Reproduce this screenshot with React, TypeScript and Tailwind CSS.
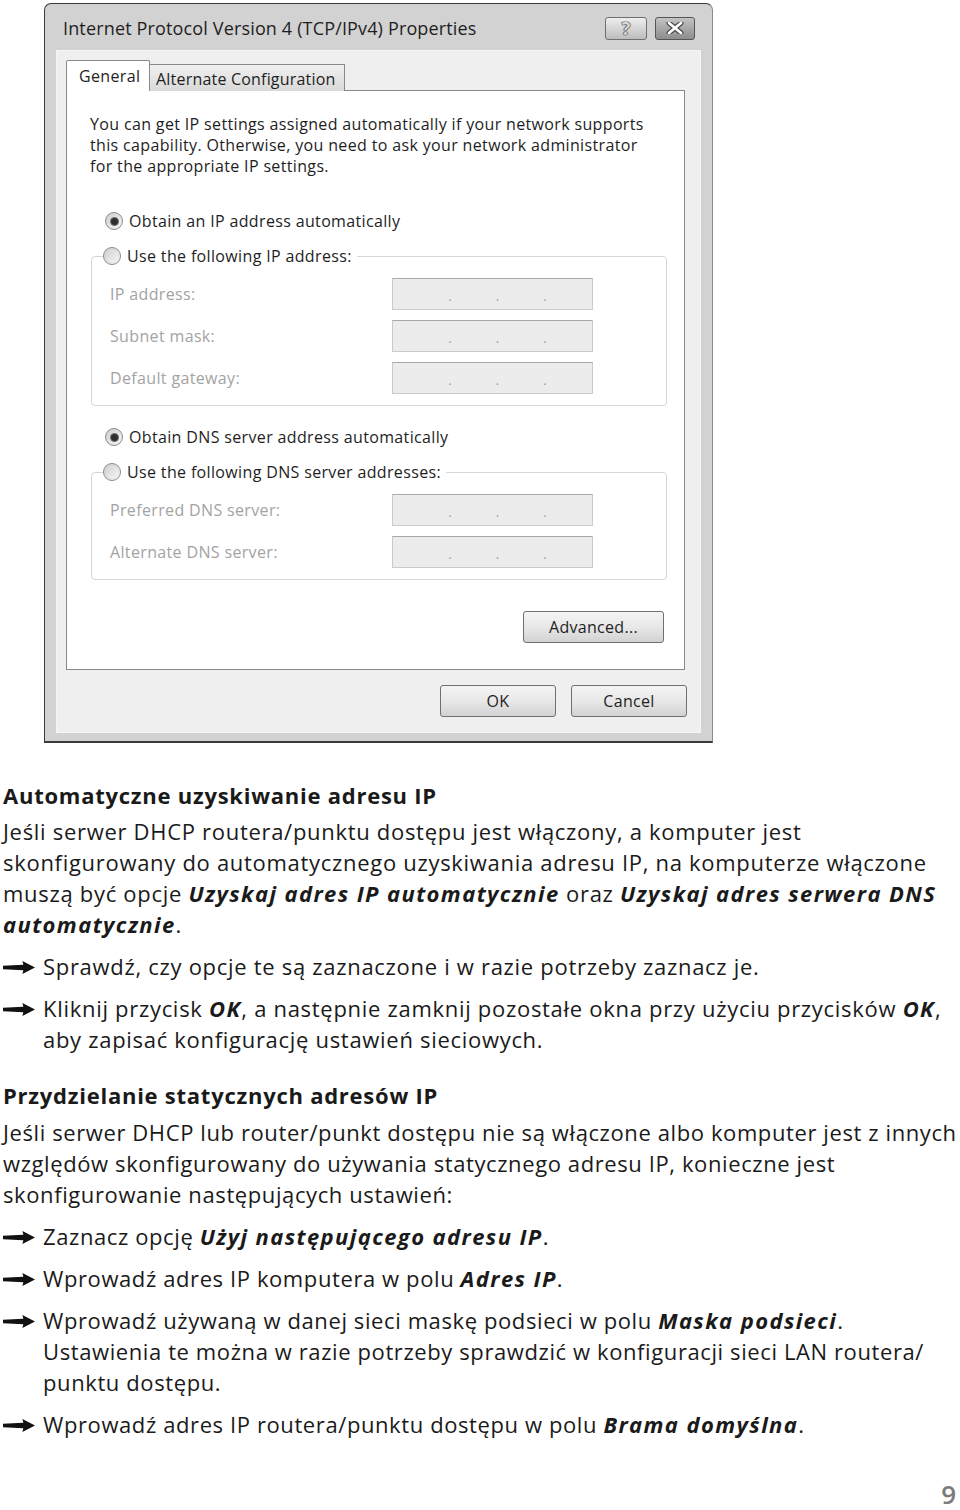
const dlgFont = "font-['Open_Sans',sans-serif]";

function Radio({ checked }: { checked?: boolean }) {
  return (
    <span className="w-[18px] h-[18px] shrink-0 rounded-full border border-[#8a8a8a] bg-linear-to-br from-[#cfcfcf] to-[#f7f7f7] flex items-center justify-center">
      {checked && (
        <span className="w-[9px] h-[9px] rounded-full bg-[#2f2f2f] border border-[#6a6a6a]" />
      )}
    </span>
  );
}

function IpField() {
  return (
    <div className="w-[201px] h-[32px] bg-[#ececec] border border-[#cacaca] border-t-[#a9a9a9] flex items-end justify-center gap-[44px] pl-[10px] pb-[6px] text-[#9a9a9a] text-[13px] leading-none tracking-normal">
      <span>.</span>
      <span>.</span>
      <span>.</span>
    </div>
  );
}

function Button({ label, w }: { label: string; w: string }) {
  return (
    <div
      className={`${w} h-[32px] rounded-[3px] border border-[#707070] bg-linear-to-b from-[#f4f4f4] via-[#e8e8e8] to-[#d2d2d2] flex items-center justify-center text-[16px] text-[#1e1e1e] tracking-[0.3px]`}
    >
      {label}
    </div>
  );
}

function Group({ legend, rows }: { legend: string; rows: string[] }) {
  return (
    <fieldset className="ml-[24px] w-[576px] border border-[#d6d6d6] rounded-[4px] pb-[11px]">
      <legend className="ml-[11px] pr-[5px] h-[22px] flex items-center gap-[6px] text-[16px] text-[#1e1e1e] tracking-[0.35px]">
        <Radio />
        {legend}
      </legend>
      <div className="mt-[11px] flex flex-col gap-[10px]">
        {rows.map((r) => (
          <div key={r} className="flex items-center pl-[18px]">
            <span className="w-[282px] text-[16px] text-[#a3a3a3] tracking-[0.35px]">{r}</span>
            <IpField />
          </div>
        ))}
      </div>
    </fieldset>
  );
}

function Dialog() {
  return (
    <div
      className={`${dlgFont} ml-[44px] mt-[3px] w-[669px] h-[740px] border border-[#3a3a3a] border-r-[#8a8a8a] border-b-2 rounded-t-[7px] bg-[#d2d2d2] flex flex-col`}
    >
      <div className="h-[46px] shrink-0 flex items-center justify-between pl-[18px] pr-[17px] pt-[2px]">
        <span className="text-[18px] text-[#1e1e1e] tracking-[0.15px]">
          Internet Protocol Version 4 (TCP/IPv4) Properties
        </span>
        <div className="flex gap-[8px]">
          <div className="w-[42px] h-[23px] rounded-[3px] border border-[#6f6f6f] bg-linear-to-b from-[#eeeeee] to-[#bdbdbd] flex items-center justify-center text-[18px] leading-none font-bold text-[#dcdcdc] [text-shadow:0_0_1px_#222,0_0_1px_#222,0_0_1px_#222]">
            ?
          </div>
          <div className="w-[40px] h-[23px] rounded-[3px] border border-[#555] bg-linear-to-b from-[#c4c4c4] to-[#8d8d8d] flex items-center justify-center">
            <svg width="18" height="12" viewBox="0 0 18 12">
              <path d="M3 1 L15 11 M15 1 L3 11" stroke="#4a4a4a" strokeWidth="5" strokeLinecap="round" />
              <path d="M3 1 L15 11 M15 1 L3 11" stroke="#ffffff" strokeWidth="2.6" strokeLinecap="round" />
            </svg>
          </div>
        </div>
      </div>

      <div className="mx-[11px] mb-[8px] flex-1 bg-[#efefef] border border-[#f6f6f6] pl-[9px] pr-[13px] pt-[9px] flex flex-col">
        <div className="flex items-end h-[31px] relative z-10">
          <div className="w-[84px] h-[31px] bg-white border border-b-0 border-[#898989] rounded-t-[2px] flex items-center pl-[12px] text-[16px] text-[#1e1e1e] tracking-[0.35px]">
            General
          </div>
          <div className="w-[195px] h-[27px] bg-linear-to-b from-[#f0f0f0] to-[#d9d9d9] border border-l-0 border-b-0 border-[#898989] flex items-center pl-[6px] pt-[1px] text-[16px] text-[#1e1e1e] tracking-[0.2px]">
            Alternate Configuration
          </div>
        </div>
        <div className="-mt-px w-[619px] h-[580px] bg-white border border-[#898989] flex flex-col text-[16px] text-[#1e1e1e] tracking-[0.35px]">
          <p className="ml-[23px] mt-[23px] leading-[21px]">
            You can get IP settings assigned automatically if your network supports
            <br />
            this capability. Otherwise, you need to ask your network administrator
            <br />
            for the appropriate IP settings.
          </p>
          <div className="ml-[38px] mt-[33px] h-[22px] flex items-center gap-[6px]">
            <Radio checked />
            Obtain an IP address automatically
          </div>
          <div className="mt-[13px]">
            <Group legend="Use the following IP address:" rows={["IP address:", "Subnet mask:", "Default gateway:"]} />
          </div>
          <div className="ml-[38px] mt-[20px] h-[22px] flex items-center gap-[6px]">
            <Radio checked />
            Obtain DNS server address automatically
          </div>
          <div className="mt-[13px]">
            <Group legend="Use the following DNS server addresses:" rows={["Preferred DNS server:", "Alternate DNS server:"]} />
          </div>
          <div className="mt-[31px] flex justify-end mr-[20px]">
            <Button label="Advanced..." w="w-[141px]" />
          </div>
        </div>
        <div className="mt-[15px] flex justify-end gap-[15px]">
          <Button label="OK" w="w-[116px]" />
          <Button label="Cancel" w="w-[116px]" />
        </div>
      </div>
    </div>
  );
}

function Arrow() {
  return (
    <svg width="32" height="15" viewBox="0 0 33 15" className="shrink-0 mt-[9px]">
      <path d="M0 5.6 L21 4.6 L20 0.8 L33 7.5 L20 14.2 L21 10.4 L0 9.4 Z" fill="#111" />
    </svg>
  );
}

function Bullet({ children }: { children: React.ReactNode }) {
  return (
    <li className="flex gap-[8px]">
      <Arrow />
      <span>{children}</span>
    </li>
  );
}

const B = ({ children }: { children: React.ReactNode }) => (
  <b className="font-bold italic tracking-[1.4px]">{children}</b>
);

export default function App() {
  return (
    <div className="w-[960px] h-[1510px] bg-white overflow-hidden flex flex-col">
      <Dialog />

      <div className="pl-[3px] mt-[37px] whitespace-nowrap font-['Open_Sans',sans-serif] text-[22px] leading-[31px] text-[#1a1a1a] tracking-[0.7px]">
        <h2 className="font-bold tracking-[0.75px] mb-[5px]">Automatyczne uzyskiwanie adresu IP</h2>
        <p>
          Jeśli serwer DHCP routera/punktu dostępu jest włączony, a komputer jest
          <br />
          skonfigurowany do automatycznego uzyskiwania adresu IP, na komputerze włączone
          <br />
          muszą być opcje <B>Uzyskaj adres IP automatycznie</B> oraz <B>Uzyskaj adres serwera DNS</B>
          <br />
          <B>automatycznie</B>.
        </p>
        <ul className="mt-[11px] flex flex-col gap-[11px]">
          <Bullet>Sprawdź, czy opcje te są zaznaczone i w razie potrzeby zaznacz je.</Bullet>
          <Bullet>
            Kliknij przycisk <B>OK</B>, a następnie zamknij pozostałe okna przy użyciu przycisków <B>OK</B>,
            <br />
            aby zapisać konfigurację ustawień sieciowych.
          </Bullet>
        </ul>

        <div className="tracking-[0.6px]">
          <h2 className="font-bold mt-[25px] mb-[6px] tracking-[0.75px]">Przydzielanie statycznych adresów IP</h2>
          <p>
            Jeśli serwer DHCP lub router/punkt dostępu nie są włączone albo komputer jest z innych
            <br />
            względów skonfigurowany do używania statycznego adresu IP, konieczne jest
            <br />
            skonfigurowanie następujących ustawień:
          </p>
          <ul className="mt-[11px] flex flex-col gap-[11px]">
            <Bullet>
              Zaznacz opcję <B>Użyj następującego adresu IP</B>.
            </Bullet>
            <Bullet>
              Wprowadź adres IP komputera w polu <B>Adres IP</B>.
            </Bullet>
            <Bullet>
              Wprowadź używaną w danej sieci maskę podsieci w polu <B>Maska podsieci</B>.
              <br />
              Ustawienia te można w razie potrzeby sprawdzić w konfiguracji sieci LAN routera/
              <br />
              punktu dostępu.
            </Bullet>
            <Bullet>
              Wprowadź adres IP routera/punktu dostępu w polu <B>Brama domyślna</B>.
            </Bullet>
          </ul>
        </div>
      </div>

      <div className="mt-auto mb-[3px] flex justify-end pr-[4px] font-['Open_Sans',sans-serif] text-[26px] leading-[26px] font-semibold text-[#7a7a7a]">
        9
      </div>
    </div>
  );
}
